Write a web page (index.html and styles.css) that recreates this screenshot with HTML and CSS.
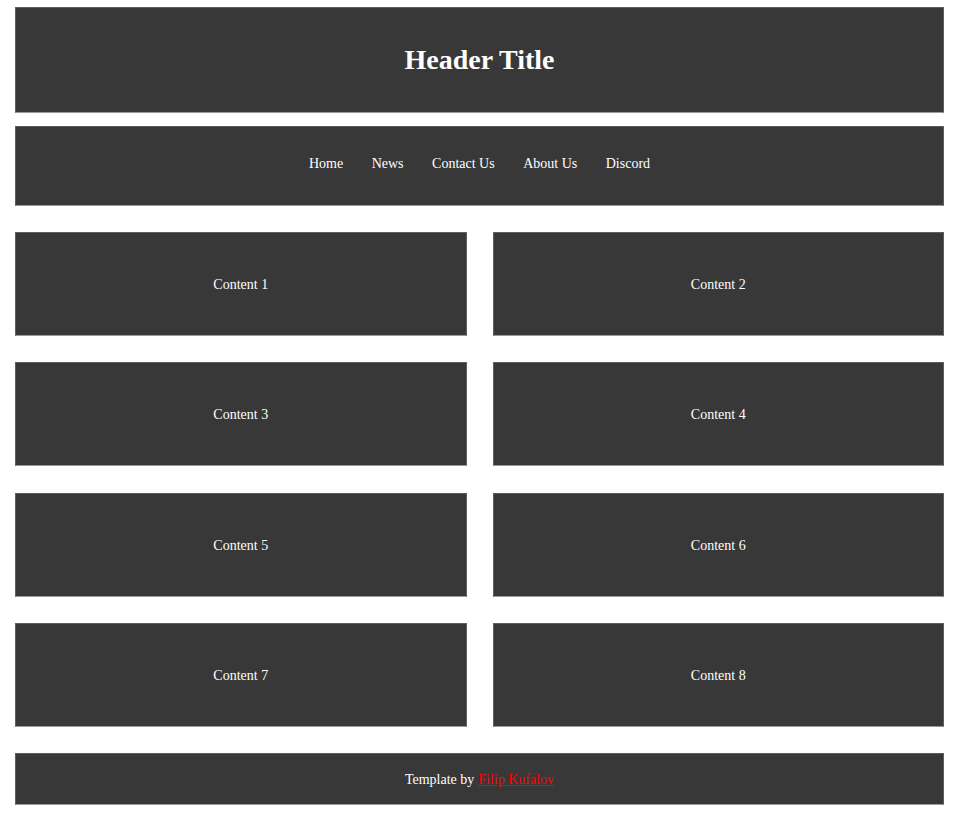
FILE: index.html
```html
<!DOCTYPE html>
<html>
<head>
<meta charset="utf-8">
<link rel="stylesheet" href="styles.css">
</head>
<body>
<div class="page">
  <header class="box header"><h1>Header Title</h1></header>
  <nav class="box nav">
    <a href="#">Home</a>
    <a href="#">News</a>
    <a href="#">Contact Us</a>
    <a href="#">About Us</a>
    <a href="#">Discord</a>
  </nav>
  <main class="grid">
    <div class="box card">Content 1</div>
    <div class="box card">Content 2</div>
    <div class="box card">Content 3</div>
    <div class="box card">Content 4</div>
    <div class="box card">Content 5</div>
    <div class="box card">Content 6</div>
    <div class="box card">Content 7</div>
    <div class="box card">Content 8</div>
  </main>
  <footer class="box footer">Template by <a href="#">Filip Kufalov</a></footer>
</div>
</body>
</html>
```
FILE: styles.css
```css
html, body { margin: 0; padding: 0; background: #fff; }
body { font-family: "Liberation Serif", "Times New Roman", serif; font-size: 14px; color: #fff; }
.page {
  padding: 7px 13px 0 15px;
  display: flex;
  flex-direction: column;
}
.box {
  background: #383838;
  border: 1px solid #5e5e5e;
  border-bottom-color: #9a9a9a;
  box-sizing: border-box;
  display: flex;
  align-items: center;
  justify-content: center;
}
.header { height: 106px; }
.header h1 { margin: 0; font-size: 28px; font-weight: bold; }
.nav { height: 80px; margin-top: 13px; gap: 28.5px; padding-bottom: 4px; }
.nav a { color: #fff; text-decoration: none; }
.grid {
  margin-top: 26px;
  display: grid;
  grid-template-columns: 1fr 1fr;
  column-gap: 26px;
  row-gap: 26.34px;
}
.card { height: 104px; padding-top: 2px; }
.footer { height: 52px; margin-top: 26px; padding-top: 2px; }
.footer a { color: #f00; margin-left: 4px; }
```
